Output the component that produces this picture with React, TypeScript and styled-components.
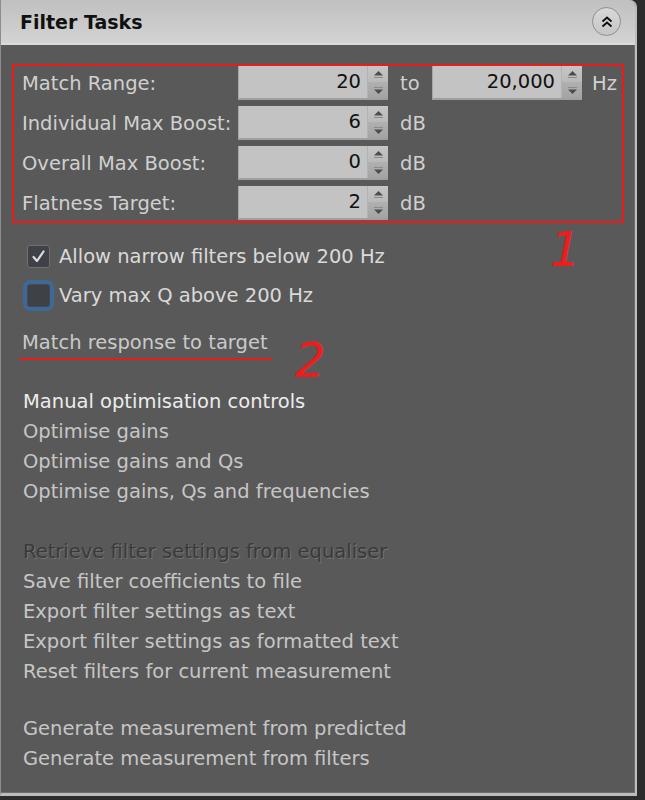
import React from "react";
import styled, { createGlobalStyle } from "styled-components";

const GlobalStyle = createGlobalStyle`
  html, body { margin: 0; padding: 0; background: #2c2c2c; }
  body { font-family: "DejaVu Sans", "Lucida Grande", sans-serif; }
  #root { width: 645px; height: 800px; }
`;

const Panel = styled.div`
  box-sizing: border-box;
  width: 637px;
  height: 796px;
  background: #595959;
  border-left: 1px solid #8d8d8d;
  border-right: 2px solid #bdbdbd;
  border-bottom: 3px solid #bcbcbc;
  border-top-right-radius: 7px;
  overflow: hidden;
  display: flex;
  flex-direction: column;
  box-shadow: inset -1px 0 0 #6e6e6e, inset 0 -1px 0 #6e6e6e;
`;

const Header = styled.div`
  height: 43px;
  flex: none;
  display: flex;
  align-items: center;
  justify-content: space-between;
  background: linear-gradient(#c0c0c0, #d3d3d3);
  border-bottom: 2px solid #dadada;
  padding: 0 14px 0 19px;
`;

const Title = styled.h1`
  margin: 0;
  font-size: 19px;
  font-weight: bold;
  color: #111;
  font-family: "DejaVu Sans", sans-serif;
`;

const CollapseButton = styled.div`
  box-sizing: border-box;
  width: 29px;
  height: 29px;
  border-radius: 50%;
  border: 1.5px solid #8e8e8e;
  background: linear-gradient(#d8d8d8, #c6c6c6);
  display: flex;
  align-items: center;
  justify-content: center;
`;

const Body = styled.div`
  flex: 1;
  display: flex;
  flex-direction: column;
  padding: 19px 0 0 11px;
  font-size: 19.5px;
`;

const FormBox = styled.div`
  position: relative;
  box-sizing: border-box;
  width: 612px;
  border: 2px solid #ea1b1b;
  display: grid;
  grid-template-columns: 216px 150px 44px 150px auto;
  grid-auto-rows: 34px;
  row-gap: 6px;
  align-items: center;
  padding: 0 0 1px 8px;
`;

const Label = styled.div`
  color: #d0d0d0;
  white-space: nowrap;
`;

const Unit = styled.div<{ $pad: number }>`
  color: #d0d0d0;
  padding-left: ${(p) => p.$pad}px;
  white-space: nowrap;
`;

const Field = styled.div`
  box-sizing: border-box;
  height: 34px;
  display: flex;
  background: #c3c3c3;
  border-left: 1px solid #a6a6a6;
  border-bottom: 2px solid #a0a0a0;
`;

const Value = styled.div`
  flex: 1;
  text-align: right;
  padding-right: 6px;
  color: #111;
  line-height: 32px;
`;

const Spinner = styled.div`
  width: 20px;
  display: flex;
  flex-direction: column;
  border-left: 1px solid #b2b2b2;
`;

const SpinButton = styled.div<{ $down?: boolean }>`
  flex: 1;
  display: flex;
  align-items: center;
  justify-content: center;
  background: ${(p) => (p.$down ? "linear-gradient(#b0b0b0, #a4a4a4)" : "linear-gradient(#c6c6c6, #bababa)")};
`;

const Annotation = styled.span<{ $left: number; $top: number }>`
  position: absolute;
  left: ${(p) => p.$left}px;
  top: ${(p) => p.$top}px;
  font-size: 48px;
  line-height: 1;
  font-style: italic;
  color: #ee1c1c;
  font-family: "DejaVu Sans", sans-serif;
  pointer-events: none;
`;

const CheckList = styled.div`
  margin-top: 22px;
  padding-left: 15px;
  display: flex;
  flex-direction: column;
  gap: 16px;
`;

const CheckRow = styled.label`
  display: flex;
  align-items: center;
  gap: 9px;
  height: 23px;
  color: #dadada;
`;

const Box = styled.span<{ $focused?: boolean }>`
  box-sizing: border-box;
  width: 23px;
  height: 23px;
  border-radius: 3px;
  background: #3e4246;
  border: 1px solid ${(p) => (p.$focused ? "#4a4a4a" : "#6f6f6f")};
  box-shadow: ${(p) => (p.$focused ? "0 0 0 4px #3d6898" : "none")};
  display: flex;
  align-items: center;
  justify-content: center;
`;

const LinkRow = styled.div`
  position: relative;
  margin-top: 21px;
  height: 32px;
`;

const Link = styled.span`
  display: inline-block;
  margin-left: 7px;
  padding: 0 4px 0 3px;
  line-height: 30px;
  color: #cacaca;
  border-bottom: 2px solid #e81a1a;
`;

const Menu = styled.div`
  margin-top: 27px;
  padding-left: 11px;
  display: flex;
  flex-direction: column;
`;

const Item = styled.div<{ $kind?: "head" | "disabled" }>`
  height: 30px;
  line-height: 30px;
  white-space: nowrap;
  color: ${(p) => (p.$kind === "head" ? "#ececec" : p.$kind === "disabled" ? "#3a3a3a" : "#c6c6c6")};
  text-shadow: ${(p) => (p.$kind === "disabled" ? "1px 1px 0 rgba(140,140,140,0.55)" : "none")};
`;

const Spacer = styled.div<{ $h: number }>`
  height: ${(p) => p.$h}px;
`;

const UpArrow = () => (
  <svg width="11" height="9" viewBox="0 0 11 9">
    <path d="M1 5.5 L5.5 1 L10 5.5 Z" fill="#4c4c4c" />
    <rect x="1" y="7" width="9" height="1" fill="#8a8a8a" />
  </svg>
);

const DownArrow = () => (
  <svg width="11" height="9" viewBox="0 0 11 9">
    <rect x="1" y="1" width="9" height="1" fill="#8a8a8a" />
    <path d="M1 3.5 L5.5 8 L10 3.5 Z" fill="#4c4c4c" />
  </svg>
);

const NumberField = ({ value }: { value: string }) => (
  <Field>
    <Value>{value}</Value>
    <Spinner>
      <SpinButton>
        <UpArrow />
      </SpinButton>
      <SpinButton $down>
        <DownArrow />
      </SpinButton>
    </Spinner>
  </Field>
);

export default function App() {
  return (
    <>
      <GlobalStyle />
      <Panel>
        <Header>
          <Title>Filter Tasks</Title>
          <CollapseButton>
            <svg width="14" height="14" viewBox="0 0 14 14">
              <path d="M2.5 6.5 L7 2.5 L11.5 6.5" fill="none" stroke="#111" strokeWidth="1.9" />
              <path d="M2.5 11.5 L7 7.5 L11.5 11.5" fill="none" stroke="#111" strokeWidth="1.9" />
            </svg>
          </CollapseButton>
        </Header>
        <Body>
          <FormBox>
            <Label>Match Range:</Label>
            <NumberField value="20" />
            <Unit $pad={12}>to</Unit>
            <NumberField value="20,000" />
            <Unit $pad={10}>Hz</Unit>

            <Label>Individual Max Boost:</Label>
            <NumberField value="6" />
            <Unit $pad={12}>dB</Unit>
            <span />
            <span />

            <Label>Overall Max Boost:</Label>
            <NumberField value="0" />
            <Unit $pad={12}>dB</Unit>
            <span />
            <span />

            <Label>Flatness Target:</Label>
            <NumberField value="2" />
            <Unit $pad={12}>dB</Unit>
            <span />
            <span />

            <Annotation $left={536} $top={159}>1</Annotation>
          </FormBox>

          <CheckList>
            <CheckRow>
              <Box>
                <svg width="15" height="15" viewBox="0 0 15 15">
                  <path d="M2.5 8 L6 12 L12.5 2.5" fill="none" stroke="#dcdcdc" strokeWidth="2.2" strokeLinecap="round" strokeLinejoin="round" />
                </svg>
              </Box>
              Allow narrow filters below 200 Hz
            </CheckRow>
            <CheckRow>
              <Box $focused />
              Vary max Q above 200 Hz
            </CheckRow>
          </CheckList>

          <LinkRow>
            <Link>Match response to target</Link>
            <Annotation $left={283} $top={8}>2</Annotation>
          </LinkRow>

          <Menu>
            <Item $kind="head">Manual optimisation controls</Item>
            <Item>Optimise gains</Item>
            <Item>Optimise gains and Qs</Item>
            <Item>Optimise gains, Qs and frequencies</Item>
            <Spacer $h={30} />
            <Item $kind="disabled">Retrieve filter settings from equaliser</Item>
            <Item>Save filter coefficients to file</Item>
            <Item>Export filter settings as text</Item>
            <Item>Export filter settings as formatted text</Item>
            <Item>Reset filters for current measurement</Item>
            <Spacer $h={27} />
            <Item>Generate measurement from predicted</Item>
            <Item>Generate measurement from filters</Item>
          </Menu>
        </Body>
      </Panel>
    </>
  );
}
